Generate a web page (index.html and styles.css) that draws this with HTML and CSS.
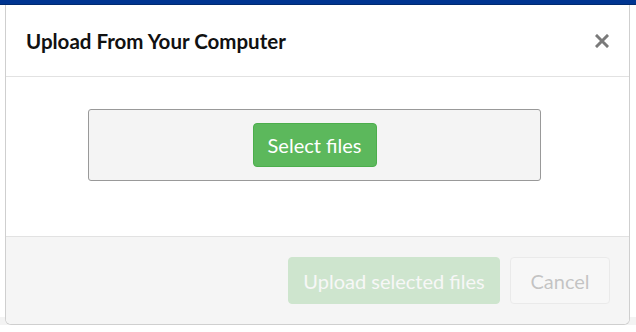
FILE: index.html
```html
<!DOCTYPE html>
<html lang="en">
<head>
    <meta charset="UTF-8">
    <meta name="viewport" content="width=device-width, initial-scale=1.0">
    <title>Upload From Your Computer</title>
    <link rel="stylesheet" href="styles.css">
</head>
<body>

    <div class="top-bar"></div>

    <div class="page">
        <div class="modal">
            <div class="modal-header">
                <h2 class="modal-title">Upload From Your Computer</h2>
                <button class="close-button" aria-label="Close">
                    <svg width="14" height="14" viewBox="0 0 14 14">
                        <path d="M2 2 L12 12 M12 2 L2 12" stroke="#7a7a7a" stroke-width="3" stroke-linecap="square" fill="none"/>
                    </svg>
                </button>
            </div>

            <div class="modal-body">
                <div class="drop-zone">
                    <button class="select-button">Select files</button>
                </div>
            </div>

            <div class="modal-footer">
                <button class="upload-button" disabled>Upload selected files</button>
                <button class="cancel-button" disabled>Cancel</button>
            </div>
        </div>
    </div>

</body>
</html>
```

FILE: styles.css
```css
body {
    font-family: 'Lato', 'Liberation Sans', sans-serif;
    background-color: #fff;
    color: #111;
    margin: 0;
    padding: 0;
    height: 332px;
    overflow: hidden;
}

.top-bar {
    height: 5px;
    background-color: #003591;
    border-bottom: 1px solid #002a70;
    box-sizing: border-box;
}

.page {
    padding: 0 6px 0 5px;
    background: linear-gradient(#fff 312px, #f3f3f3 312px);
}

.modal {
    background-color: #fff;
    border: 1px solid #cfcfcf;
    border-top: none;
    border-radius: 0 0 6px 6px;
    overflow: hidden;
}

.modal-header {
    display: flex;
    align-items: center;
    justify-content: space-between;
    height: 71px;
    padding: 0 20px;
    border-bottom: 1px solid #e2e2e2;
}

.modal-title {
    margin: 0;
    font-size: 20.5px;
    font-weight: bold;
    color: #111;
}

.close-button {
    background: none;
    border: none;
    padding: 0;
    cursor: pointer;
    display: flex;
}

.modal-body {
    padding: 32px 0 55px;
}

.drop-zone {
    width: 451px;
    height: 70px;
    margin: 0 auto 0 82px;
    background-color: #f4f4f4;
    border: 1px solid #999;
    border-radius: 3px;
    display: flex;
    align-items: center;
    justify-content: center;
}

.select-button {
    font-family: inherit;
    font-size: 20px;
    color: #fff;
    background-color: #5cb85c;
    border: 1px solid #4cae4c;
    border-radius: 4px;
    width: 124px;
    height: 44px;
    padding: 0;
    cursor: pointer;
}

.modal-footer {
    display: flex;
    justify-content: flex-end;
    gap: 10px;
    padding: 20px 19px 20px;
    background-color: #f5f5f5;
    border-top: 1px solid #e2e2e2;
}

.upload-button,
.cancel-button {
    font-family: inherit;
    font-size: 20px;
    height: 47px;
    padding: 0;
    border-radius: 4px;
    opacity: 0.25;
}

.upload-button {
    width: 212px;
    color: #fff;
    background-color: #5cb85c;
    border: 1px solid #5cb85c;
}

.cancel-button {
    width: 100px;
    color: #333;
    background-color: #fff;
    border: 1px solid #ccc;
}
```
